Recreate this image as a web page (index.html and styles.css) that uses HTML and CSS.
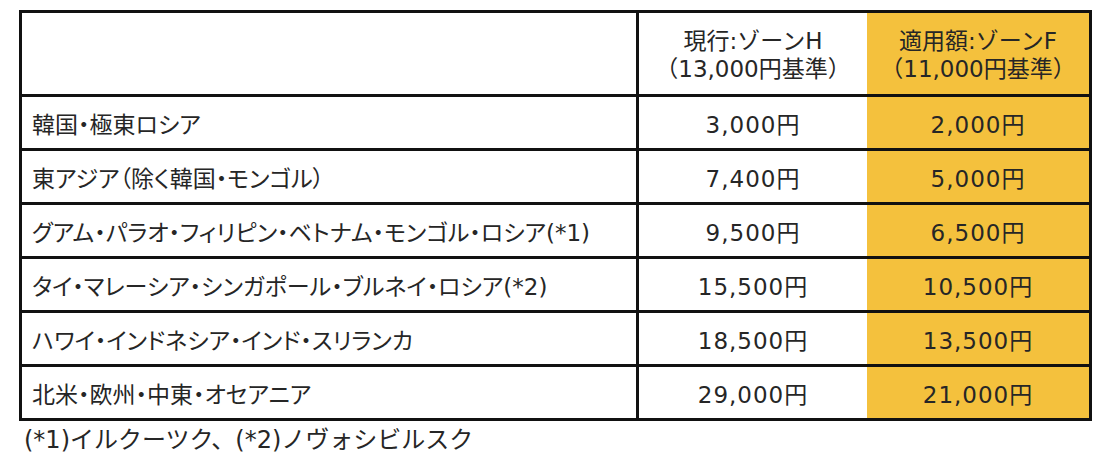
FILE: index.html
```html
<!DOCTYPE html>
<html lang="ja">
<head>
<meta charset="utf-8">
<title>料金表</title>
<link rel="stylesheet" href="styles.css">
</head>
<body>
<table class="fare">
  <colgroup>
    <col class="c-region">
    <col class="c-now">
    <col class="c-new">
  </colgroup>
  <thead>
    <tr>
      <th class="region"></th>
      <th class="now">現行:ゾーンH<br>（13,000円基準）</th>
      <th class="new">適用額:ゾーンF<br>（11,000円基準）</th>
    </tr>
  </thead>
  <tbody>
    <tr><td class="region">韓国・極東ロシア</td><td class="now">3,000円</td><td class="new">2,000円</td></tr>
    <tr><td class="region">東アジア（除く韓国・モンゴル）</td><td class="now">7,400円</td><td class="new">5,000円</td></tr>
    <tr><td class="region">グアム・パラオ・フィリピン・ベトナム・モンゴル・ロシア(*1)</td><td class="now">9,500円</td><td class="new">6,500円</td></tr>
    <tr><td class="region">タイ・マレーシア・シンガポール・ブルネイ・ロシア(*2)</td><td class="now">15,500円</td><td class="new">10,500円</td></tr>
    <tr><td class="region">ハワイ・インドネシア・インド・スリランカ</td><td class="now">18,500円</td><td class="new">13,500円</td></tr>
    <tr class="last"><td class="region">北米・欧州・中東・オセアニア</td><td class="now">29,000円</td><td class="new">21,000円</td></tr>
  </tbody>
</table>
<p class="note">(*1)イルクーツク、(*2)ノヴォシビルスク</p>
</body>
</html>
```

FILE: styles.css
```css
* { box-sizing: border-box; }

html, body {
  margin: 0;
  padding: 0;
  background: #ffffff;
}

body {
  padding: 10px 0 0 19px;
  font-family: "DejaVu Sans", "Noto Sans CJK JP", sans-serif;
  color: #262626;
  font-size: 23px;
}

.fare {
  border-collapse: separate;
  border-spacing: 0;
  table-layout: fixed;
  width: 1073px;
  border: 3px solid #111111;
  font-feature-settings: "palt";
}

.c-region { width: 617px; }
.c-now { width: 228px; }
.c-new { width: 222px; }

.fare th,
.fare td {
  padding: 0;
  height: 54px;
  vertical-align: middle;
  font-weight: normal;
  border-bottom: 3px solid #111111;
}

.fare th {
  height: 84px;
  line-height: 28px;
  padding-top: 3px;
  text-align: center;
  font-feature-settings: normal;
}

.fare .last td {
  height: 51px;
  border-bottom: 0;
}

.fare .region {
  border-right: 3px solid #111111;
  text-align: left;
  padding-left: 10px;
}

.fare td.now,
.fare td.new {
  text-align: center;
  font-size: 23px;
  letter-spacing: 1px;
}

.fare .new {
  background: #f4c13d;
}

.note {
  margin: 3px 0 0 5px;
  font-size: 24px;
  line-height: 32px;
}
```
